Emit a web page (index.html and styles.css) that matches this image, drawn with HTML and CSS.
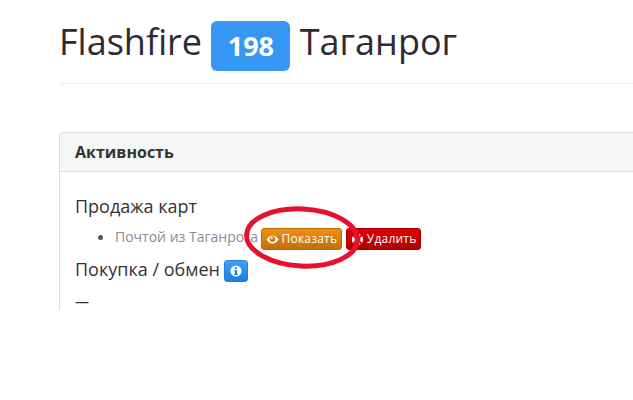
FILE: index.html
```html
<!DOCTYPE html>
<html lang="en">
<head>
    <meta charset="UTF-8">
    <meta name="viewport" content="width=device-width, initial-scale=1.0">
    <title>Flashfire</title>
    <link rel="stylesheet" href="styles.css">
</head>
<body>
    <div class="container">
        <div class="page-header">
            <h1>Flashfire <span class="badge">198</span> Таганрог</h1>
        </div>
        <div class="panel">
            <div class="panel-heading">Активность</div>
            <div class="panel-body">
                <h4>Продажа карт</h4>
                <ul>
                    <li>
                        <span class="muted">Почтой из Таганрога</span>
                        <a href="#" class="btn btn-show"><svg class="icon" viewBox="0 0 14 14"><path d="M0.5 7C3 3.4 5 2.6 7 2.6S11 3.4 13.5 7C11 10.6 9 11.4 7 11.4S3 10.6 0.5 7Z" fill="#fff"/><circle cx="7" cy="6.6" r="3" fill="#d07a0c"/><circle cx="6.2" cy="5.6" r="1.1" fill="#fff"/></svg>Показать</a>
                        <a href="#" class="btn btn-delete"><svg class="icon" viewBox="0 0 14 14"><circle cx="7" cy="7" r="4.6" fill="none" stroke="#fff" stroke-width="3"/><path d="M1 1L5 5M13 1L9 5M1 13L5 9M13 13L9 9" stroke="#c80000" stroke-width="2"/></svg>Удалить</a>
                    </li>
                </ul>
                <h4>Покупка / обмен <a href="#" class="btn-info"><svg viewBox="0 0 12 12"><circle cx="6" cy="6" r="5.5" fill="#fff"/><path d="M4.8 2.4H7V4H4.8ZM4.3 5H7V8.6H7.8V10H4.3V8.6H5V6.4H4.3Z" fill="#2a7fd8"/></svg></a></h4>
                <p class="none">—</p>
            </div>
        </div>
    </div>
    <svg class="circle" viewBox="0 0 633 400"><ellipse cx="302" cy="237.5" rx="55.5" ry="28.5" fill="none" stroke="#e8112d" stroke-width="5" transform="rotate(3 302 237.5)"/></svg>
</body>
</html>
```

FILE: styles.css
```css
html, body {
    height: 100%;
}

body {
    font-family: "Open Sans", sans-serif;
    font-size: 14px;
    color: #333;
    margin: 0;
    padding: 0;
    background-color: #fff;
    overflow: hidden;
}

.container {
    width: 720px;
    margin-left: 59px;
}

.page-header {
    height: 84px;
    box-sizing: border-box;
    padding-top: 21px;
    border-bottom: 1px solid #eee;
    margin-bottom: 48px;
}

h1 {
    font-size: 36px;
    font-weight: 400;
    line-height: 42px;
    margin: 0;
    color: #2f2a33;
}

.badge {
    display: inline-block;
    width: 79px;
    height: 50px;
    font-size: 27px;
    font-weight: 700;
    line-height: 50px;
    text-align: center;
    color: #fff;
    background-color: #3797f5;
    border-radius: 6px;
    vertical-align: top;
}

.panel {
    height: 178px;
    box-sizing: border-box;
    border: 1px solid #ddd;
    border-bottom: none;
    border-radius: 4px 4px 0 0;
    overflow: hidden;
}

.panel-heading {
    height: 39px;
    box-sizing: border-box;
    padding: 0 15px;
    line-height: 38px;
    font-size: 16px;
    font-weight: 700;
    background-color: #f5f5f5;
    border-bottom: 1px solid #ddd;
}

.panel-body {
    padding: 24px 15px 0;
}

h4 {
    font-size: 18px;
    font-weight: 400;
    line-height: 20px;
    margin: 0;
}

ul {
    margin: 11px 0 9px;
    padding-left: 40px;
    line-height: 22px;
    color: #555;
}

.muted {
    font-size: 14px;
    line-height: 18px;
    vertical-align: 1px;
    color: #8b8b94;
    margin-right: -1px;
}

.btn {
    display: inline-flex;
    align-items: center;
    gap: 3px;
    height: 22px;
    box-sizing: border-box;
    padding: 0 4px;
    font-size: 12px;
    letter-spacing: 0.2px;
    color: #fff;
    text-decoration: none;
    border-radius: 3px;
    vertical-align: middle;
}

.btn-show {
    background: linear-gradient(#ee8f14, #c46f08);
    border: 1px solid #b96a08;
}

.btn-delete {
    background: linear-gradient(#e00000, #b00000);
    border: 1px solid #a80000;
}

.icon {
    width: 13px;
    height: 13px;
}

.btn-info {
    display: inline-flex;
    align-items: center;
    justify-content: center;
    width: 24px;
    height: 22px;
    margin: 1px 0 0 -1px;
    border-radius: 3px;
    background: linear-gradient(#3da0f5, #1f7fdc);
    border: 1px solid #2a7fd8;
    box-sizing: border-box;
    vertical-align: top;
}

.btn-info svg {
    width: 12px;
    height: 12px;
}

.none {
    margin: 12px 0 0;
    font-size: 14px;
    line-height: 16px;
}

.circle {
    position: absolute;
    left: 0;
    top: 0;
    width: 633px;
    height: 400px;
    pointer-events: none;
}
```
